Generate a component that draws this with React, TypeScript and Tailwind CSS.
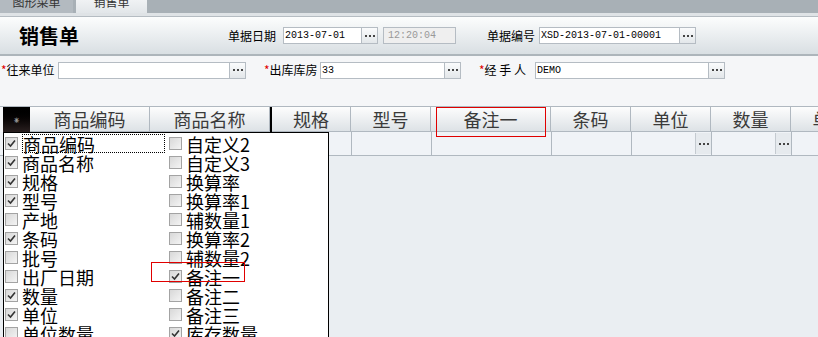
import React from 'react'

const cjk = "font-['SimSun','Noto_Sans_CJK_SC',sans-serif]"
const mono = "font-['Liberation_Mono','Noto_Sans_CJK_SC',monospace]"

const leftItems: [string, boolean][] = [
  ['商品编码', true],
  ['商品名称', true],
  ['规格', true],
  ['型号', true],
  ['产地', false],
  ['条码', true],
  ['批号', false],
  ['出厂日期', false],
  ['数量', true],
  ['单位', true],
  ['单位数量', false],
]

const rightItems: [string, boolean][] = [
  ['自定义2', false],
  ['自定义3', false],
  ['换算率', false],
  ['换算率1', false],
  ['辅数量1', false],
  ['换算率2', false],
  ['辅数量2', false],
  ['备注一', true],
  ['备注二', false],
  ['备注三', false],
  ['库存数量', true],
]

const columns = [
  { label: '规格', w: 'w-[79px]' },
  { label: '型号', w: 'w-[80px]' },
  { label: '备注一', w: 'w-[120px]' },
  { label: '条码', w: 'w-[80px]' },
  { label: '单位', w: 'w-[80px]', btn: true },
  { label: '数量', w: 'w-[80px]', btn: true },
  { label: '单价', w: 'w-[80px]' },
]

const Dots = () => (
  <span className="flex gap-[2px]">
    <span className="h-[2px] w-[2px] bg-[#444]" />
    <span className="h-[2px] w-[2px] bg-[#444]" />
    <span className="h-[2px] w-[2px] bg-[#444]" />
  </span>
)

const PickButton = () => (
  <div className="flex h-[17px] w-[16px] shrink-0 items-center justify-center border border-l-0 border-[#b5bcc3] bg-gradient-to-b from-[#fafbfc] to-[#e3e7ea]">
    <Dots />
  </div>
)

const Field = ({
  label,
  star,
  value,
  width,
  labelWidth,
}: {
  label: string
  star?: boolean
  value: string
  width: string
  labelWidth: string
}) => (
  <div className="flex items-center">
    <span className={`flex shrink-0 items-center text-[12px] text-black ${cjk} ${labelWidth}`}>
      {star && <span className="text-[12px] text-[#e00000]">*</span>}
      {label}
    </span>
    <div
      className={`flex h-[17px] shrink-0 items-center border border-[#b5bcc3] bg-white px-[1px] text-[10px] text-black ${mono} ${width}`}
    >
      {value}
    </div>
    <PickButton />
  </div>
)

const CheckBox = ({ checked }: { checked: boolean }) => (
  <span className="flex h-[13px] w-[13px] shrink-0 items-center justify-center border border-[#a3a3a3] bg-gradient-to-br from-[#d8d8d8] to-[#f4f4f4]">
    {checked && (
      <svg width="9" height="9" viewBox="0 0 9 9">
        <path d="M1 4.5 L3.5 7 L8 1.5" fill="none" stroke="#333" strokeWidth="1.6" />
      </svg>
    )}
  </span>
)

const ListItem = ({ label, checked, focus }: { label: string; checked: boolean; focus?: boolean }) => (
  <div className="flex h-[19px] items-center gap-[4px]">
    <CheckBox checked={checked} />
    <span
      className={`flex h-[19px] items-center text-[18px] leading-none text-black ${cjk} ${
        focus ? 'w-[143px] border border-dotted border-black' : ''
      }`}
    >
      {label}
    </span>
  </div>
)

const headCell =
  'flex shrink-0 items-center justify-center border-r border-b border-[#b0b8c0] bg-gradient-to-b from-[#fdfdfd] to-[#dde2e6] text-[18px] text-[#3a3a3a]'

export default function App() {
  return (
    <div className="relative h-[337px] w-[818px] overflow-hidden bg-[#eaeef2]">
      {/* tab strip */}
      <div className="flex h-[13px] overflow-hidden bg-[#a8b0b6]">
        <div className={`flex w-[73px] shrink-0 justify-center bg-[#b3bac0] text-[12px] leading-none text-[#333] ${cjk}`}>
          <span className="-mt-[4px]">图形菜单</span>
        </div>
        <div
          className={`ml-[3px] flex w-[71px] shrink-0 justify-center bg-gradient-to-b from-[#f0f2f4] to-[#e2e6e9] text-[12px] leading-none text-[#333] ${cjk}`}
        >
          <span className="-mt-[4px]">销售单</span>
        </div>
      </div>
      <div className="h-[4px] border-b border-[#b5bcc2] bg-[#dfe3e6]" />

      {/* title band */}
      <div className="flex h-[39px] items-center border-b-2 border-[#adb5bb] bg-gradient-to-b from-[#fcfdfd] to-[#d9dfe3]">
        <span className={`ml-[19px] w-[209px] shrink-0 text-[20px] font-bold text-black ${cjk}`}>销售单</span>
        <Field label="单据日期" value="2013-07-01" width="w-[79px]" labelWidth="w-[55px]" />
        <div
          className={`ml-[5px] flex h-[17px] w-[73px] shrink-0 items-center border border-[#b5bcc3] bg-[#efefef] px-[4px] text-[10px] text-[#999] ${mono}`}
        >
          12:20:04
        </div>
        <div className="ml-[31px]">
          <Field label="单据编号" value="XSD-2013-07-01-00001" width="w-[141px]" labelWidth="w-[52px]" />
        </div>
      </div>

      {/* form row */}
      <div className="h-[50px] bg-[#f5f6f8] pt-[5px]">
        <div className="flex items-center">
          <div className="ml-[1px]">
            <Field label="往来单位" star value="" width="w-[172px]" labelWidth="w-[57px]" />
          </div>
          <div className="ml-[18px]">
            <Field label="出库库房" star value="33" width="w-[125px]" labelWidth="w-[56px]" />
          </div>
          <div className="ml-[18px]">
            <Field label="经 手 人" star value="DEMO" width="w-[174px]" labelWidth="w-[56px]" />
          </div>
        </div>
      </div>

      {/* grid header */}
      <div className="flex h-[26px] border-t border-[#b0b8c0] bg-[#f5f6f8]">
        <div className="ml-[3px] flex w-[27px] shrink-0 items-center justify-center bg-gradient-to-b from-[#000] to-[#2a2020] text-[10px] text-[#999]">
          ⁕
        </div>
        {['商品编码', '商品名称'].map((c) => (
          <div key={c} className={`w-[120px] ${headCell} ${cjk}`}>
            {c}
          </div>
        ))}
        <div className="w-[2px] shrink-0 bg-black" />
        {columns.map((c) => (
          <div key={c.label} className={`${headCell} ${cjk} ${c.w}`}>
            {c.label}
          </div>
        ))}
      </div>

      {/* data row */}
      <div className="flex h-[24px] border-b border-[#b0b8c0] bg-[#f0f3f7]">
        <div className="w-[273px] shrink-0" />
        {columns.map((c) => (
          <div
            key={c.label}
            className={`flex shrink-0 items-stretch justify-end border-r border-[#b0b8c0] py-[1px] ${c.w}`}
          >
            {c.btn && (
              <div className="flex w-[16px] items-center justify-center border-l border-[#c4cad0] bg-[#e6eaee]">
                <Dots />
              </div>
            )}
          </div>
        ))}
      </div>

      {/* column chooser popup */}
      <div className="absolute left-[3px] top-[132px] flex h-[210px] w-[326px] border border-black bg-white pl-[1px] pt-[1px]">
        <div className="w-[164px] shrink-0">
          {leftItems.map(([l, c], i) => (
            <ListItem key={l} label={l} checked={c} focus={i === 0} />
          ))}
        </div>
        <div>
          {rightItems.map(([l, c]) => (
            <ListItem key={l} label={l} checked={c} />
          ))}
        </div>
      </div>

      {/* red highlight marks */}
      <div className="absolute left-[436px] top-[107px] h-[30px] w-[110px] border border-[#e00000]" />
      <div className="absolute left-[151px] top-[262px] h-[20px] w-[94px] border border-[#e00000]" />
    </div>
  )
}
